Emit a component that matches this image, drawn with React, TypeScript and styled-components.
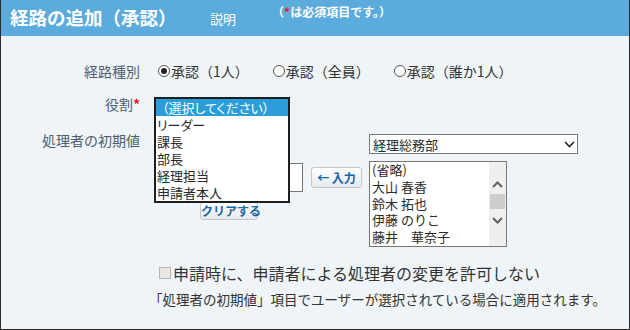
import React from 'react';
import styled, { createGlobalStyle } from 'styled-components';

const GlobalStyle = createGlobalStyle`
  html, body {
    margin: 0;
    padding: 0;
    background: #ffffff;
  }
  body {
    font-family: "Noto Sans CJK JP", "Noto Sans", sans-serif;
    color: #333333;
  }
  * {
    box-sizing: border-box;
  }
`;

const Frame = styled.div`
  width: 630px;
  height: 330px;
  display: flex;
  flex-direction: column;
  background: #eff4f8;
  border: 1px solid #2b2b2b;
  border-top: none;
  overflow: hidden;
`;

const Header = styled.header`
  height: 36px;
  flex: none;
  display: flex;
  align-items: flex-start;
  background: #5babdc;
  color: #ffffff;
`;

const Title = styled.h1`
  width: 209px;
  margin: 0;
  padding: 5px 0 0 9px;
  font-size: 18.5px;
  line-height: 24px;
  font-weight: bold;
`;

const HelpLink = styled.span`
  padding-top: 10px;
  font-size: 13px;
  line-height: 18px;
`;

const RequiredNote = styled.span`
  margin-left: 36px;
  padding-top: 4px;
  font-size: 12px;
  line-height: 16px;
  font-weight: bold;
`;

const Asterisk = styled.span`
  color: #e41b1b;
  font-weight: bold;
`;

const Row = styled.div<{ $top: number }>`
  display: grid;
  grid-template-columns: 139px 1fr;
  column-gap: 14px;
  margin-top: ${({ $top }) => $top}px;
`;

const Label = styled.div`
  text-align: right;
  font-size: 14px;
  line-height: 20px;
  color: #4e5e70;
  white-space: nowrap;
`;

const Value = styled.div`
  position: relative;
  display: flex;
  align-items: center;
  min-height: 20px;
  font-size: 14px;
  line-height: 20px;
`;

const RadioLabel = styled.label`
  display: inline-flex;
  align-items: center;
  margin-right: 20px;
  color: #333333;
  white-space: nowrap;
`;

const RadioMark = styled.span<{ $checked?: boolean }>`
  position: relative;
  width: 12px;
  height: 12px;
  margin: 0 1px 0 4px;
  border: 1px solid #555555;
  border-radius: 50%;
  background: #ffffff;

  &::after {
    content: '';
    display: ${({ $checked }) => ($checked ? 'block' : 'none')};
    position: absolute;
    left: 2px;
    top: 2px;
    width: 6px;
    height: 6px;
    border-radius: 50%;
    background: #222222;
  }
`;

const Popup = styled.ul`
  position: absolute;
  left: 0;
  top: 3px;
  z-index: 10;
  width: 136px;
  margin: 0;
  padding: 0;
  list-style: none;
  background: #ffffff;
  border: 2px solid #1e1e1e;
  font-size: 13px;
  font-feature-settings: 'palt';
`;

const PopupItem = styled.li<{ $active?: boolean; $indent?: number }>`
  height: 17px;
  line-height: 17px;
  padding-left: ${({ $indent }) => $indent ?? 1}px;
  background: ${({ $active }) => ($active ? '#2a9dda' : 'transparent')};
  color: ${({ $active }) => ($active ? '#ffffff' : '#2a2a2a')};
  white-space: nowrap;
`;

const InitialValue = styled.div`
  display: flex;
  align-items: flex-start;
  padding-top: 4px;
`;

const PickerGroup = styled.div`
  display: flex;
  flex-direction: column;
  margin-top: 29px;
`;

const InputRow = styled.div`
  display: flex;
  align-items: center;
  gap: 8px;
`;

const TextBox = styled.div`
  width: 149px;
  height: 29px;
  background: #ffffff;
  border: 1px solid #777777;
`;

const SmallButton = styled.button<{ $w: number; $h: number; $offset?: number }>`
  width: ${({ $w }) => $w}px;
  height: ${({ $h }) => $h}px;
  margin: ${({ $offset }) => ($offset ? `10px 0 0 ${$offset}px` : '0')};
  padding: 0;
  border: 1px solid #c4c8cc;
  border-radius: 3px;
  background: linear-gradient(#ffffff, #e6e9ec);
  color: #1766a8;
  font-family: "Noto Sans CJK JP", sans-serif;
  font-size: 12px;
  line-height: 1;
  font-weight: bold;
  white-space: nowrap;
`;

const UserGroup = styled.div`
  display: flex;
  flex-direction: column;
  gap: 7px;
  margin-left: 7px;
`;

const Select = styled.div`
  display: flex;
  align-items: center;
  justify-content: space-between;
  width: 209px;
  height: 20px;
  padding: 0 2px 0 3px;
  background: #ffffff;
  border: 1px solid #777777;
  font-size: 13px;
  color: #2a2a2a;
`;

const ListBox = styled.div`
  display: flex;
  width: 138px;
  height: 86px;
  background: #ffffff;
  border: 1px solid #777777;
  overflow: hidden;
`;

const ListItems = styled.ul`
  flex: 1;
  margin: 0;
  padding: 0 0 0 2px;
  list-style: none;
  font-size: 13px;
  color: #2a2a2a;
`;

const ListItem = styled.li`
  height: 16.8px;
  line-height: 16.8px;
  white-space: pre;
`;

const ScrollTrack = styled.div`
  width: 17px;
  display: flex;
  flex-direction: column;
  align-items: center;
  padding-top: 19px;
  background: #efefef;
`;

const ScrollThumb = styled.div`
  width: 15px;
  height: 15px;
  margin: 6px 0 8px;
  background: #cdcdcd;
`;

const CheckRow = styled.label`
  display: flex;
  align-items: center;
  margin: 15px 0 0 158px;
  font-size: 16px;
  line-height: 22px;
  color: #333333;
`;

const CheckMark = styled.span`
  width: 12px;
  height: 12px;
  margin-right: 2px;
  border: 1px solid #b5b5b5;
  background: #e8e8e8;
`;

const Note = styled.p`
  margin: 6px 0 0 148px;
  font-size: 13.5px;
  line-height: 18px;
  color: #333333;
  white-space: nowrap;
`;

const Chevron = ({ up, color, width }: { up?: boolean; color: string; width: number }) => (
  <svg width="11" height="7" viewBox="0 0 11 7" aria-hidden="true">
    <path
      d={up ? 'M1 6 L5.5 1.5 L10 6' : 'M1 1 L5.5 5.5 L10 1'}
      fill="none"
      stroke={color}
      strokeWidth={width}
    />
  </svg>
);

const roles = ['リーダー', '課長', '部長', '経理担当', '申請者本人'];
const users = ['(省略)', '大山 春香', '鈴木 拓也', '伊藤 のりこ', '藤井　華奈子'];
const routeTypes = [
  { label: '承認（1人）', checked: true },
  { label: '承認（全員）', checked: false },
  { label: '承認（誰か1人）', checked: false },
];

export default function App() {
  return (
    <>
      <GlobalStyle />
      <Frame>
        <Header>
          <Title>経路の追加（承認）</Title>
          <HelpLink>説明</HelpLink>
          <RequiredNote>
            （<Asterisk>*</Asterisk>は必須項目です。）
          </RequiredNote>
        </Header>

        <Row $top={25}>
          <Label>経路種別</Label>
          <Value>
            {routeTypes.map((t) => (
              <RadioLabel key={t.label}>
                <RadioMark $checked={t.checked} />
                {t.label}
              </RadioLabel>
            ))}
          </Value>
        </Row>

        <Row $top={13}>
          <Label>
            役割<Asterisk>*</Asterisk>
          </Label>
          <Value>
            <Popup>
              <PopupItem $active $indent={6}>
                （選択してください）
              </PopupItem>
              {roles.map((r) => (
                <PopupItem key={r}>{r}</PopupItem>
              ))}
            </Popup>
          </Value>
        </Row>

        <Row $top={16}>
          <Label>処理者の初期値</Label>
          <InitialValue>
            <PickerGroup>
              <InputRow>
                <TextBox />
                <SmallButton $w={51} $h={21}>
                  ← 入力
                </SmallButton>
              </InputRow>
              <SmallButton $w={58} $h={18} $offset={46}>
                クリアする
              </SmallButton>
            </PickerGroup>
            <UserGroup>
              <Select>
                経理総務部
                <Chevron color="#222222" width={1.6} />
              </Select>
              <ListBox>
                <ListItems>
                  {users.map((u) => (
                    <ListItem key={u}>{u}</ListItem>
                  ))}
                </ListItems>
                <ScrollTrack>
                  <Chevron up color="#606060" width={2} />
                  <ScrollThumb />
                  <Chevron color="#606060" width={2} />
                </ScrollTrack>
              </ListBox>
            </UserGroup>
          </InitialValue>
        </Row>

        <CheckRow>
          <CheckMark />
          申請時に、申請者による処理者の変更を許可しない
        </CheckRow>
        <Note>「処理者の初期値」項目でユーザーが選択されている場合に適用されます。</Note>
      </Frame>
    </>
  );
}
